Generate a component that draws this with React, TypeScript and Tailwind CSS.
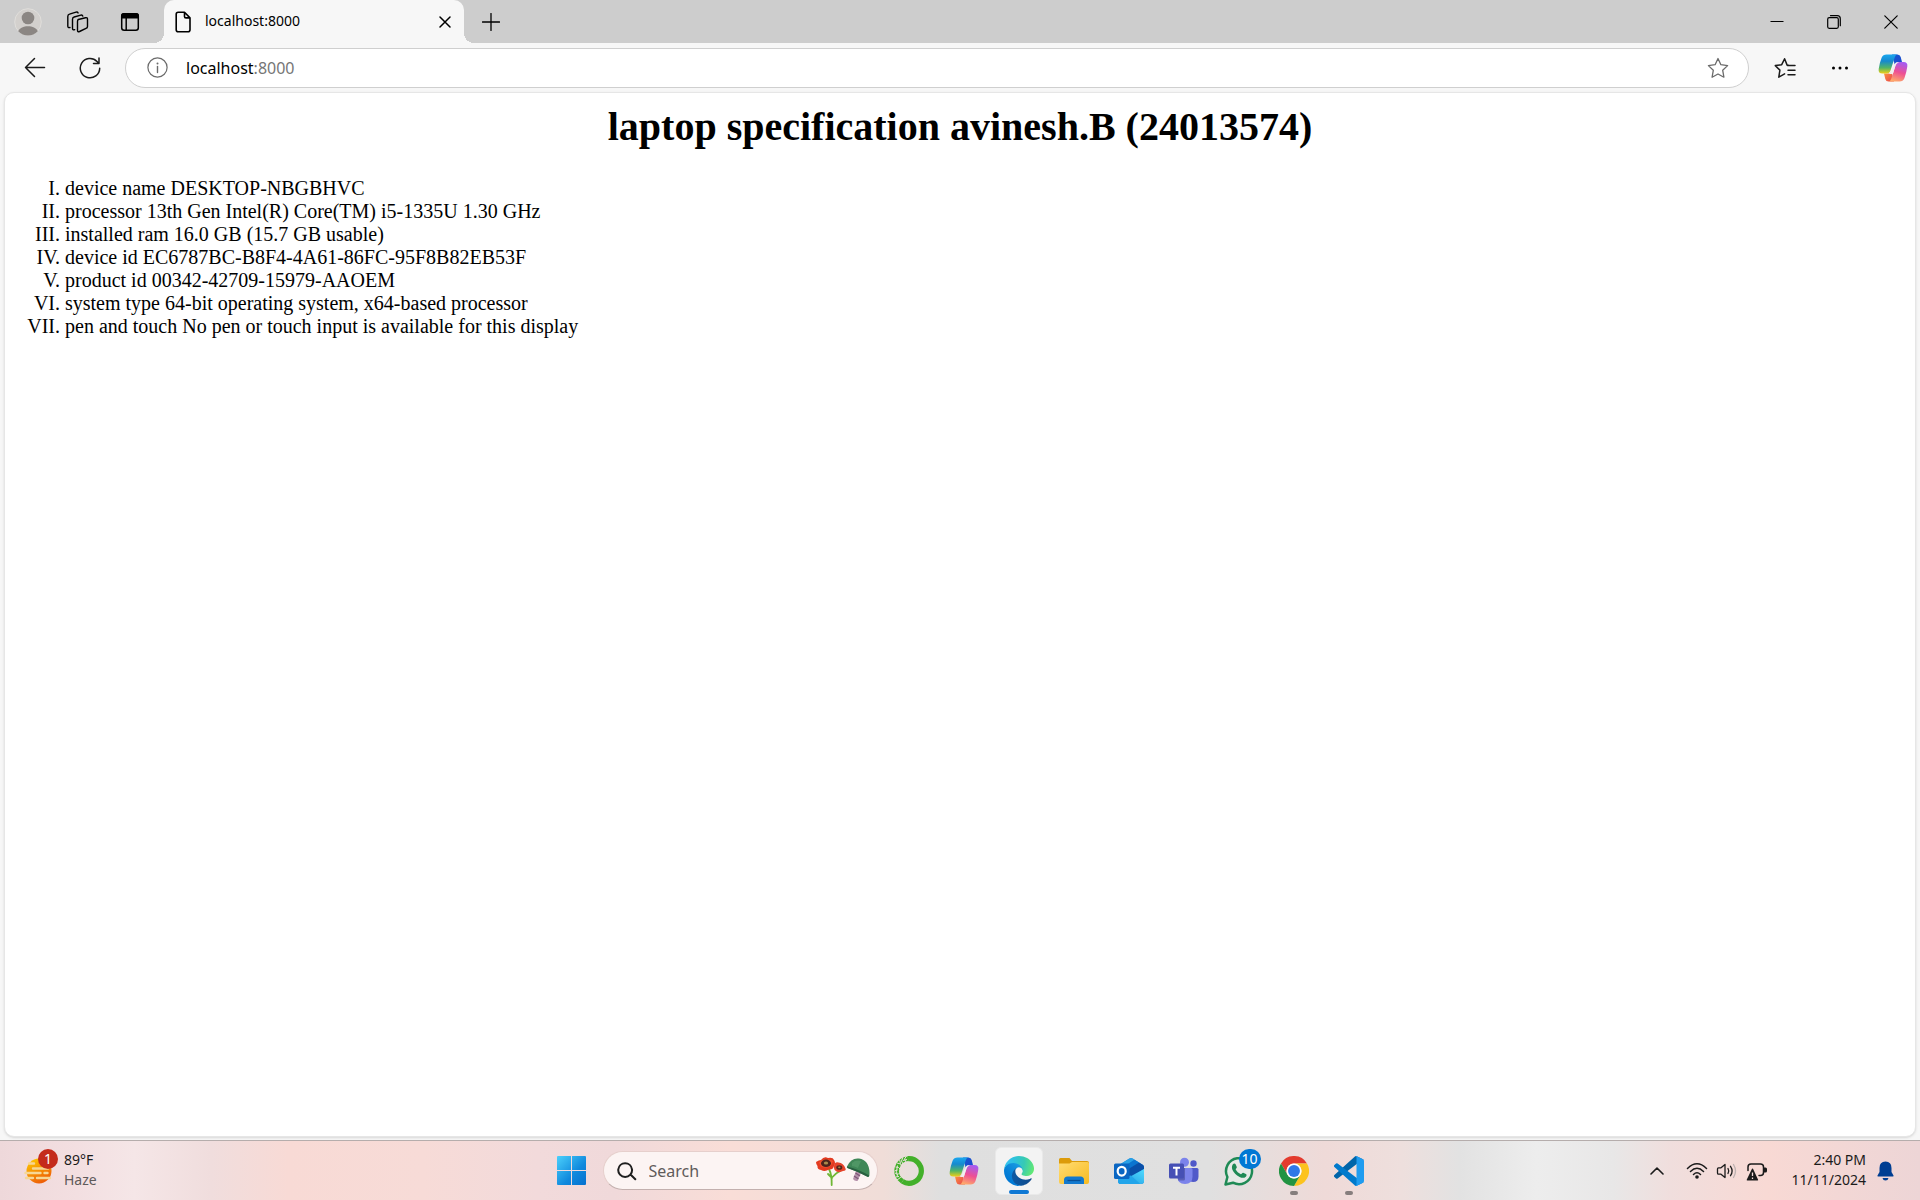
import React, { useId } from "react";

const specs = [
  "device name DESKTOP-NBGBHVC",
  "processor 13th Gen Intel(R) Core(TM) i5-1335U 1.30 GHz",
  "installed ram 16.0 GB (15.7 GB usable)",
  "device id EC6787BC-B8F4-4A61-86FC-95F8B82EB53F",
  "product id 00342-42709-15979-AAOEM",
  "system type 64-bit operating system, x64-based processor",
  "pen and touch No pen or touch input is available for this display",
];

const line = { fill: "none", stroke: "currentColor", strokeLinecap: "round", strokeLinejoin: "round" } as const;

function ProfileIcon() {
  return (
    <svg className="size-7" viewBox="0 0 28 28" aria-hidden="true">
      <circle cx="14" cy="14" r="13.3" fill="#d3d0cd" stroke="#e0dedb" />
      <circle cx="14" cy="10" r="6.3" fill="#8b8683" />
      <path d="M4.2 23.2c1.6-3.4 5.3-5 9.8-5s8.2 1.6 9.8 5A13.3 13.3 0 0 1 4.2 23.2z" fill="#8b8683" />
    </svg>
  );
}

function WorkspacesIcon() {
  return (
    <svg className="size-[22px]" viewBox="0 0 22 22" aria-hidden="true">
      <g {...line} strokeWidth="1.4">
        <path d="M11.3 8.5 18.5 6.7q2-.4 2 1.5v7.2q0 1.5-1.500 2l-6.500 3.100q-2 .8-2-1.300v-8.600q0-1.700.8-2.100z" />
        <path d="M7.700 18.700q-2.200.7-2.200-1.500V8.300q0-1.800 1.700-2.300l6.600-1.900q1.600-.4 2 1" />
        <path d="M3 16.500q-2.200.7-2.200-1.500V5.400q0-1.700 1.700-2.200L9 1.100q1.600-.4 2.100.8" />
      </g>
    </svg>
  );
}

function TabActionsIcon() {
  return (
    <svg className="size-5" viewBox="0 0 20 20" aria-hidden="true">
      <rect x="1.700" y="1.700" width="16.600" height="16.600" rx="2.500" {...line} strokeWidth="1.500" />
      <path d="M1 6.500V4q0-3 3-3h12q3 0 3 3v2.500z" fill="currentColor" />
      <path d="M6.200 6v12" {...line} strokeWidth="1.500" />
    </svg>
  );
}

function PageIcon() {
  return (
    <svg className="h-[22px] w-4" viewBox="0 0 16 22" aria-hidden="true">
      <path d="M3.200 1.200h6.300l5.500 5.700v11.900q0 2-2 2H3.200q-2 0-2-2V3.200q0-2 2-2zM9.500 1.200v4.200q0 1.500 1.500 1.500h4" {...line} strokeWidth="1.600" />
    </svg>
  );
}

function StarIcon({ lines = false }: { lines?: boolean }) {
  return (
    <svg className="size-[22px]" viewBox="0 0 22 22" aria-hidden="true">
      {lines ? (
        <path d="M14.500 8.300l-1.400-.2L10.600 1.800 7.700 7.700 1.300 8.600l4.600 4.500-1.100 7.100 5.800-3.300M13.500 8.500H21M14 13.200h7M14 17.800h7" {...line} strokeWidth="1.500" />
      ) : (
        <path d="M11 1.500 13.900 7.700l6.700.9-4.900 4.700 1.200 6.900L11 17l-5.900 3.200 1.200-6.900L1.400 8.600l6.700-.9z" {...line} strokeWidth="1.300" />
      )}
    </svg>
  );
}

function CopilotIcon() {
  const id = useId();
  return (
    <svg className="size-[30px]" viewBox="0 0 30 30" aria-hidden="true">
      <defs>
        <linearGradient id={id + "a"} x1="0" y1="0" x2="0" y2="1">
          <stop offset="0" stopColor="#1aa7ee" />
          <stop offset=".35" stopColor="#1689cf" />
          <stop offset=".7" stopColor="#52b566" />
          <stop offset="1" stopColor="#f0cf16" />
        </linearGradient>
        <linearGradient id={id + "b"} x1="0.6" y1="0" x2="0.3" y2="1">
          <stop offset="0" stopColor="#a65cf0" />
          <stop offset=".5" stopColor="#ee5093" />
          <stop offset="1" stopColor="#ffad68" />
        </linearGradient>
        <linearGradient id={id + "c"} x1="0" y1="0" x2="1" y2="1">
          <stop offset="0" stopColor="#1457cf" />
          <stop offset="1" stopColor="#1e4bd0" />
        </linearGradient>
        <linearGradient id={id + "d"} x1="0" y1="0" x2="1" y2="1">
          <stop offset="0" stopColor="#ff9a3d" />
          <stop offset="1" stopColor="#e6424f" />
        </linearGradient>
      </defs>
      <path d="M14 1.500h5.500q2.500 0 3.200 2.500l1.300 5h-4q-2.500 0-3.300 2.600z" fill={`url(#${id}c)`} />
      <path d="M16 28.500h-5.500q-2.500 0-3.200-2.500L6 20.500h4q2.500 0 3.300-2.600z" fill={`url(#${id}d)`} />
      <path d="M8.500 1.500h11q-2 .3-2.700 2.700L12.500 17.500q-.9 3-4 3h-4q-4.500 0-3.800-4.500Q1.500 10 3.600 4.700 5 1.500 8.500 1.500z" fill={`url(#${id}a)`} />
      <path d="M21.500 28.500h-11q2-.3 2.700-2.700L17.500 12.500q.9-3.500 4-3.500h4q4.500 0 3.800 4.500-.8 6-2.900 11.800-1.400 3.200-4.900 3.200z" fill={`url(#${id}b)`} />
      <path d="M16.500 11.500 18 9.500h3q-2.700.5-3.500 3L15.200 20q-.4 1-1.800 1h-3q1.700-.6 2.300-2.500z" fill="#f1f0f1" />
    </svg>
  );
}

function WeatherIcon() {
  const id = useId();
  return (
    <svg className="size-7" viewBox="0 0 28 28" aria-hidden="true">
      <defs>
        <linearGradient id={id} x1="0" y1="0" x2=".5" y2="1">
          <stop offset="0" stopColor="#ffd000" />
          <stop offset="1" stopColor="#ee6008" />
        </linearGradient>
      </defs>
      <circle cx="15" cy="14" r="12.500" fill={`url(#${id})`} />
      <g fill="none" stroke="#f6d795" strokeLinecap="round" strokeWidth="2.400">
        <path d="M5 6.500h5M9 11.500h15M1.500 16h15M20.500 16h3M2 21h7M13 21h13" />
      </g>
    </svg>
  );
}

function WindowsIcon() {
  const id = useId();
  return (
    <svg className="size-[29px]" viewBox="0 0 29 29" aria-hidden="true">
      <defs>
        <linearGradient id={id} x1="0" y1="0" x2="29" y2="29" gradientUnits="userSpaceOnUse">
          <stop offset="0" stopColor="#4bd0fb" />
          <stop offset=".6" stopColor="#1089dd" />
          <stop offset="1" stopColor="#0570cf" />
        </linearGradient>
      </defs>
      <path d="M1 0h13v14H0V1q0-1 1-1zM15 0h13q1 0 1 1v13H15zM0 15h14v14H1q-1 0-1-1zM15 15h14v13q0 1-1 1H15z" fill={`url(#${id})`} />
    </svg>
  );
}

function SearchArt() {
  return (
    <svg className="h-8 w-[54px]" viewBox="0 0 54 32" aria-hidden="true">
      <path d="M13 14q3 6 2.700 16M24 16q-4 2-7.500 6M12 19l4 4" fill="none" stroke="#6fb735" strokeWidth="1.800" strokeLinecap="round" />
      <path d="M0 7q3-2 5-2 3-4 7-2 5-1 6 2 2 3 0 6-1 4-5 3.500-4 2.500-8 .5-4-.5-3.500-4Q0 9.500 0 7z" fill="#e33a20" />
      <path d="M3 7.500q4-4.500 8-3 4-.5 6 1.500-1 4-4 6-5 1.500-8-.5z" fill="#f0522e" />
      <ellipse cx="10" cy="8.300" rx="5" ry="3.700" fill="#4a231c" />
      <ellipse cx="10" cy="8" rx="2.200" ry="1.600" fill="#a98a4a" />
      <path d="M18 11q.5-4.500 4.500-3.500 5 .5 7 6 1 2-2.500 2.500-3.500 2-6.500.5Q17.500 15 18 11z" fill="#e5432a" />
      <ellipse cx="23.300" cy="12.500" rx="3" ry="2.300" fill="#54251d" />
      <ellipse cx="23.300" cy="12.300" rx="1.200" ry=".9" fill="#a98a4a" />
      <path d="m40 16 5 2-3.500 8q-3 .5-4.500-2z" fill="#b490aa" />
      <path d="m39.500 18 4.500 3M38 21l4.500 3" stroke="#7d5876" strokeWidth="1.300" />
      <path d="M31 11.500Q35 2.500 43 3.500q10 1.500 10.500 14 0 5-1.500 4.500-9.500-5.500-20.500-9-1-.5-.5-1.500z" fill="#3f8757" />
      <path d="M36 8q4-3.500 9-2-2 4-3 7-3-1.500-6-2z" fill="#4f9665" />
      <path d="M31.500 13q10 3.500 20.500 9l1.300-1.500Q42 14 31 11.500z" fill="#286040" />
    </svg>
  );
}

function AnacondaIcon() {
  return (
    <svg className="size-[30px]" viewBox="0 0 30 30" aria-hidden="true">
      <path d="M14 2.700A12.300 12.300 0 1 1 8.500 25.400" fill="none" stroke="#43b02a" strokeWidth="5.200" />
      <path d="M14 2.700A12.300 12.300 0 0 0 8.500 25.400" fill="none" stroke="#43b02a" strokeWidth="4.800" />
      <path d="M12.500 0l-2 3 1.500 3M9 1 7.500 5 9 8M5.500 3.500l1 4 1 2.500M3 7l3.500 1M1.500 11l3 .5 2 2M.5 15l3-1M1 17l3 1.500 2-2M1.500 21 5 20.500M3 24l3.500-2.500 1-1M13 3.500l-4 1M3.500 9.500l-1 6 1 5" fill="none" stroke="#eadfdc" strokeWidth="1" />
    </svg>
  );
}

function EdgeIcon() {
  const id = useId();
  return (
    <svg className="size-[30px]" viewBox="0 0 256 256" aria-hidden="true">
      <defs>
        <linearGradient id={id + "a"} x1="63" y1="177" x2="241" y2="177" gradientUnits="userSpaceOnUse">
          <stop stopColor="#0c59a4" />
          <stop offset="1" stopColor="#114a8b" />
        </linearGradient>
        <linearGradient id={id + "b"} x1="157" y1="96" x2="46" y2="217" gradientUnits="userSpaceOnUse">
          <stop stopColor="#1b9de2" />
          <stop offset=".16" stopColor="#1595df" />
          <stop offset=".67" stopColor="#0680d7" />
          <stop offset="1" stopColor="#0078d4" />
        </linearGradient>
        <radialGradient id={id + "c"} cx="26" cy="45" r="245" gradientUnits="userSpaceOnUse">
          <stop stopColor="#35c1f1" />
          <stop offset=".25" stopColor="#2fc2df" />
          <stop offset=".6" stopColor="#36c9b5" />
          <stop offset="1" stopColor="#66eb6e" />
        </radialGradient>
      </defs>
      <path d="M231 190.500c-3.400 1.800-6.900 3.400-10.500 4.700a101.500 101.500 0 0 1-35.800 6.500c-47.200 0-88.300-32.500-88.300-74.100 0-11.800 6.500-22.200 16.400-27.800-42.700 1.800-53.700 46.300-53.700 72.300 0 73.700 67.900 81.200 82.600 81.200 7.900 0 19.800-2.300 27-4.600l1.300-.4a128.300 128.300 0 0 0 66.600-52.800 4 4 0 0 0-5.600-5z" fill={`url(#${id}a)`} />
      <path d="M105.700 241.400a79.200 79.200 0 0 1-22.700-21.300 80.700 80.700 0 0 1 29.500-120.300c3.200-1.500 8.500-4.100 15.600-4a32.400 32.400 0 0 1 25.700 13 31.900 31.900 0 0 1 6.300 18.700c0-.2 24.500-79.600-80-79.600-43.900 0-80 41.700-80 78.200a130.200 130.200 0 0 0 12.100 56 128 128 0 0 0 156.400 67 75.500 75.500 0 0 1-62.800-7.900z" fill={`url(#${id}b)`} />
      <path d="M152.300 148.900c-.8 1-3.300 2.500-3.300 5.700 0 2.700 1.700 5.200 4.800 7.300 14.400 10 41.500 8.700 41.600 8.700 10.700 0 21.100-2.900 30.300-8.300a61.400 61.400 0 0 0 30.400-52.900c.3-22.400-8-37.300-11.300-43.900C223.500 23.900 177.700 0 128 0A128 128 0 0 0 0 126.200c.5-36.500 36.800-66 80-66 3.500 0 23.500.3 42 10 16.300 8.600 24.900 19 30.800 29.200 6.200 10.700 7.300 24.100 7.300 29.500 0 5.300-2.700 13.300-7.800 20z" fill={`url(#${id}c)`} />
    </svg>
  );
}

function FolderIcon() {
  const id = useId();
  return (
    <svg className="h-7 w-[30px]" viewBox="0 0 30 28" aria-hidden="true">
      <defs>
        <linearGradient id={id} x1="0" y1="0" x2="1" y2="1">
          <stop offset="0" stopColor="#ffdc74" />
          <stop offset="1" stopColor="#f8bb20" />
        </linearGradient>
      </defs>
      <path d="M0 2.500Q0 1 1.500 1h9l2.500 3H28q2 0 2 2v4H0z" fill="#dc9b0a" />
      <path d="M0 6.500h10.500L13 5h15.500q1.500 0 1.500 1.500V25q0 2-2 2H2q-2 0-2-2z" fill={`url(#${id})`} />
      <path d="M5 27v-4q0-3.500 3.500-3.500h13q3.500 0 3.500 3.500v4z" fill="#1279cf" />
      <path d="M8.500 23.500h13" stroke="#084f96" strokeWidth="1.300" />
    </svg>
  );
}

function OutlookIcon() {
  const id = useId();
  return (
    <svg className="size-[30px]" viewBox="0 0 30 30" aria-hidden="true">
      <defs>
        <linearGradient id={id} x1="0" y1="1" x2="1" y2="0">
          <stop offset="0" stopColor="#1a94e0" />
          <stop offset="1" stopColor="#52dcff" />
        </linearGradient>
      </defs>
      <path d="M4 11q0-1.500 1.300-2.300L15 2.700q2-1.200 4 0l9.700 6Q30 9.500 30 11v14q0 3-3 3H7q-3 0-3-3z" fill="#1b86d8" />
      <path d="M5 9 15 2.700q2-1.200 4 0l1.500 1L9 11.500z" fill="#2aa0e6" />
      <path d="M9 11 20.500 3.700l4.500 2.800L12 15z" fill="#0b74cf" />
      <path d="m12 14.500 13-8L28.700 8.700q1.300.9 1.300 2.300v2L15 22.500z" fill="#0a4fa8" />
      <path d="M30 13v12q0 3-3 3H7q-1.500 0-2.500-1z" fill={`url(#${id})`} />
      <path d="M4 21.500 17 19.500 26 27.700q-.5.3-1 .3H7q-3 0-3-3z" fill="#22a5ea" />
      <rect y="7.500" width="15.500" height="15.500" rx="1.500" fill="#0a66c2" />
      <ellipse cx="7.700" cy="15.200" rx="4" ry="4.400" fill="none" stroke="#fff" strokeWidth="2.200" />
    </svg>
  );
}

function TeamsIcon() {
  return (
    <svg className="size-[30px]" viewBox="0 0 30 30" aria-hidden="true">
      <circle cx="24.500" cy="7.500" r="3.200" fill="#5059c9" />
      <path d="M20 12h8q1.500 0 1.500 1.500v7Q29.500 26 24 26q-3 0-4-2z" fill="#5059c9" />
      <circle cx="15.500" cy="6.300" r="4.500" fill="#7b83eb" />
      <path d="M9 12h13q1.500 0 1.500 1.500v7q0 7.500-7.500 7.500T8.500 21z" fill="#7b83eb" />
      <path d="M8.500 12H16v11q0 1.500-1.500 1.500H9.300L8.500 21z" fill="#5960b8" />
      <rect y="7.500" width="15" height="15" rx="1.500" fill="#4650b5" />
      <path d="M4 11.700h7M7.500 11.700v7.800" stroke="#fff" strokeWidth="2" />
    </svg>
  );
}

function WhatsAppIcon() {
  return (
    <svg className="size-[30px]" viewBox="0 0 30 30" aria-hidden="true">
      <path d="M1.500 28.500 3.400 21A13 13 0 1 1 9 26.700z" fill="#e6eae6" stroke="#1f8a55" strokeWidth="2.500" strokeLinejoin="round" />
      <path d="M8.700 8.600c1-1.500 2.400-1.300 2.900-.3l1.200 2.700c.3.800-.9 1.700-1.200 2.300 1 2.300 3 4 5.300 5 .7-.2 1.500-1.900 2.300-1.600l2.700 1.300c.9.500.9 1.600-.1 2.700-1.700 1.600-3.700 1.400-6.200.3-3.500-1.600-6-4.300-7.200-7.200-.7-1.800-.6-3.700.3-5.200z" fill="#1f8a55" />
    </svg>
  );
}

function ChromeIcon() {
  return (
    <svg className="size-[30px]" viewBox="0 0 48 48" aria-hidden="true">
      <path d="M3.200 12a24 24 0 0 1 41.600 0H24a12 12 0 0 0-10.400 18z" fill="#e33b2e" />
      <path d="M44.800 12A24 24 0 0 1 24 48l10.400-18A12 12 0 0 0 24 12z" fill="#fcc31e" />
      <path d="M24 48A24 24 0 0 1 3.200 12l10.400 18a12 12 0 0 0 20.800 0z" fill="#229342" />
      <circle cx="24" cy="24" r="12" fill="#fff" />
      <circle cx="24" cy="24" r="9.500" fill="#2f78e8" />
    </svg>
  );
}

function VSCodeIcon() {
  return (
    <svg className="size-[30px]" viewBox="0 0 100 100" aria-hidden="true">
      <path d="M96.500 10.800 75.900.9a6.200 6.200 0 0 0-7.100 1.200L1.300 63.600a4.200 4.200 0 0 0 0 6.200l5.500 5a4.200 4.200 0 0 0 5.300.2L93.400 13.400A4.100 4.100 0 0 1 100 16.700v-.2a6.300 6.300 0 0 0-3.500-5.700z" fill="#0065a9" />
      <path d="m96.500 89.200-20.600 9.900a6.200 6.200 0 0 1-7.100-1.200L1.300 36.400a4.200 4.200 0 0 1 0-6.200l5.500-5a4.200 4.200 0 0 1 5.300-.2l81.300 61.600a4.100 4.100 0 0 0 6.600-3.300v.2a6.300 6.300 0 0 1-3.500 5.700z" fill="#007acc" />
      <path d="M75.900 99.100a6.200 6.200 0 0 1-7.100-1.200A3.700 3.700 0 0 0 75 95.300V4.700a3.700 3.700 0 0 0-6.200-2.600A6.200 6.200 0 0 1 75.900.9l20.600 9.900a6.300 6.300 0 0 1 3.500 5.700v67a6.300 6.300 0 0 1-3.500 5.700z" fill="#1f9cf0" />
    </svg>
  );
}

function TrayIcons() {
  return (
    <>
      <svg className="h-5 w-[22px]" viewBox="0 0 22 20" aria-hidden="true">
        <g {...line} strokeWidth="1.500">
          <path d="M1.500 7.500q9.500-9.500 19 0M4.500 10.500q6.500-6.500 13 0M7.500 13.500q3.500-3.500 7 0" />
        </g>
        <circle cx="11" cy="16" r="1.800" fill="currentColor" />
      </svg>
      <svg className="h-5 w-[22px]" viewBox="0 0 22 20" aria-hidden="true">
        <g {...line} strokeWidth="1.300">
          <path d="M9 3.500v13l-4-3.300H2.500Q1.500 13.200 1.500 12V8q0-1.200 1-1.200H5z" />
          <path d="M12 7.500q1.500 2.500 0 5M14.500 5.300q3.200 4.700 0 9.400" />
          <path d="M17.500 3.500q4 6.500 0 13" stroke="#bdb1b0" />
        </g>
      </svg>
      <svg className="h-5 w-[22px]" viewBox="0 0 22 20" aria-hidden="true">
        <path d="M2 9.500V6q0-3 3-3h9.500q3 0 3 3v5.500q0 3-3 3H13" {...line} strokeWidth="1.500" />
        <path d="M18 6.500h1.500q1.500 0 1.500 1.500v2q0 1.500-1.500 1.500H18z" fill="currentColor" />
        <path d="M7 7.800 12 18.500q.5 1-.5 1H1.300q-1 0-.5-1L6 7.800q.5-.8 1 0z" fill="currentColor" />
        <path d="M6.500 11.500V15M6.500 16.500V18" stroke="#f3dcda" strokeWidth="1.300" />
      </svg>
    </>
  );
}

const iconButton = "flex shrink-0 items-center justify-center";

type AppItem = { name: string; icon: React.ReactNode; active?: boolean; running?: boolean; badge?: string };

const apps: AppItem[] = [
  { name: "Anaconda", icon: <AnacondaIcon /> },
  { name: "Copilot", icon: <CopilotIcon /> },
  { name: "Microsoft Edge", icon: <EdgeIcon />, active: true },
  { name: "File Explorer", icon: <FolderIcon /> },
  { name: "Outlook", icon: <OutlookIcon /> },
  { name: "Microsoft Teams", icon: <TeamsIcon /> },
  { name: "WhatsApp", icon: <WhatsAppIcon />, badge: "10" },
  { name: "Google Chrome", icon: <ChromeIcon />, running: true },
  { name: "Visual Studio Code", icon: <VSCodeIcon />, running: true },
];

function TabStrip() {
  return (
    <div className="flex h-[43px] bg-[#cdcdcd] text-black">
      <div className="flex w-[164px] shrink-0 items-center pl-[14px]">
        <button aria-label="Profile" className={`${iconButton} size-7`}><ProfileIcon /></button>
        <button aria-label="Workspaces" className={`${iconButton} ml-6 size-6`}><WorkspacesIcon /></button>
        <button aria-label="Tab actions" className={`${iconButton} ml-7 size-6`}><TabActionsIcon /></button>
      </div>
      <div className="relative flex w-[300px] items-center rounded-t-[10px] bg-[#f7f7f7] pl-[11px] pr-[7px]">
        <span className="absolute -left-[10px] bottom-0 size-[10px] bg-[radial-gradient(circle_at_0_0,#cdcdcd_10px,#f7f7f7_10px)]" />
        <span className="absolute -right-[10px] bottom-0 size-[10px] bg-[radial-gradient(circle_at_100%_0,#cdcdcd_10px,#f7f7f7_10px)]" />
        <PageIcon />
        <span className="ml-[14px] grow pb-0.5 text-[14px] leading-5">localhost:8000</span>
        <button aria-label="Close tab" className={`${iconButton} size-6`}>
          <svg className="size-3" viewBox="0 0 12 12" aria-hidden="true"><path d="M1 1l10 10M11 1 1 11" {...line} strokeWidth="1.500" /></svg>
        </button>
      </div>
      <button aria-label="New tab" className={`${iconButton} ml-[15px] w-6`}>
        <svg className="size-[18px]" viewBox="0 0 18 18" aria-hidden="true"><path d="M9 .5v17M.5 9h17" {...line} strokeWidth="1.300" /></svg>
      </button>
      <div className="ml-auto flex">
        <button aria-label="Minimize" className={`${iconButton} w-[57px]`}>
          <svg className="size-[14px]" viewBox="0 0 14 14" aria-hidden="true"><path d="M.5 6.500h13" stroke="currentColor" /></svg>
        </button>
        <button aria-label="Restore" className={`${iconButton} w-[57px]`}>
          <svg className="size-[14px]" viewBox="0 0 14 14" aria-hidden="true">
            <rect x=".7" y="2.700" width="10.600" height="10.600" rx="1.500" {...line} strokeWidth="1.200" />
            <path d="M3.500 .7h6.800q3 0 3 3v7" {...line} strokeWidth="1.200" />
          </svg>
        </button>
        <button aria-label="Close" className={`${iconButton} w-[58px]`}>
          <svg className="size-[14px]" viewBox="0 0 14 14" aria-hidden="true"><path d="M.8.8l12.400 12.400M13.200.8.8 13.200" {...line} strokeWidth="1.200" /></svg>
        </button>
      </div>
    </div>
  );
}

function Toolbar() {
  return (
    <div className="flex h-[49px] items-center pl-[23px] pr-3 text-[#1b1b1b]">
      <button aria-label="Back" className={`${iconButton} size-6`}>
        <svg className="size-[22px]" viewBox="0 0 22 22" aria-hidden="true"><path d="M20.500 10.500H1.500M10.500 1.500l-9 9 9 9" {...line} strokeWidth="1.500" /></svg>
      </button>
      <button aria-label="Refresh" className={`${iconButton} ml-[31px] size-6`}>
        <svg className="size-[22px]" viewBox="0 0 22 22" aria-hidden="true"><path d="M20.700 11.200A9.700 9.700 0 1 1 18 4.400l1.700 1.900M20 1v5.500h-5.500" {...line} strokeWidth="1.500" /></svg>
      </button>
      <div className="ml-[23px] flex h-10 grow items-center rounded-full border border-[#cfcfcf] bg-white pl-5 pr-[18px]">
        <button aria-label="Site information" className={`${iconButton} size-[22px] text-[#6b6b6b]`}>
          <svg className="size-[21px]" viewBox="0 0 21 21" aria-hidden="true">
            <circle cx="10.500" cy="10.500" r="9.600" {...line} strokeWidth="1.200" />
            <path d="M10.500 9.500v6" {...line} strokeWidth="1.400" />
            <circle cx="10.500" cy="6.500" r="1" fill="currentColor" />
          </svg>
        </button>
        <a href="#address" className="ml-[18px] grow text-[16px] leading-6 text-black">
          localhost<span className="text-[#767676]">:8000</span>
        </a>
        <button aria-label="Add to favorites" className={`${iconButton} size-6 text-[#6b6b6b]`}><StarIcon /></button>
      </div>
      <button aria-label="Favorites" className={`${iconButton} ml-6 size-6`}><StarIcon lines /></button>
      <button aria-label="Settings and more" className={`${iconButton} ml-[31px] size-6`}>
        <svg className="size-[18px]" viewBox="0 0 18 18" aria-hidden="true">
          <circle cx="2.500" cy="9" r="1.500" /><circle cx="9" cy="9" r="1.500" /><circle cx="15.500" cy="9" r="1.500" />
        </svg>
      </button>
      <button aria-label="Copilot" className={`${iconButton} ml-[26px] size-[30px]`}><CopilotIcon /></button>
    </div>
  );
}

function Taskbar() {
  return (
    <footer className="grid h-[60px] shrink-0 grid-cols-[1fr_auto_1fr] border-t border-[#b5adac] bg-[linear-gradient(90deg,#eed8da_0%,#f3dfe1_4%,#f5e6e7_7%,#f0dddd_11%,#f8dad5_15%,#f7dbd7_22%,#f2dadb_28%,#f0d9da_32%,#f9ddd7_38%,#f0ddd8_46%,#dfdfdf_49%,#e0e0e0_63%,#efdad8_69%,#eedfdd_73%,#e2e2e2_76%,#ededed_80%,#e8e7e7_84%,#f0dedd_87%,#f8d9d4_92%,#edd5d6_100%)]">
      <button className="flex items-center gap-1 justify-self-start pl-[24px] text-left">
        <span className="relative">
          <WeatherIcon />
          <span className="absolute -top-2 left-[14px] flex size-5 items-center justify-center rounded-full bg-[#c42b1c] text-[14px] leading-5 text-white">1</span>
        </span>
        <span className="ml-2 pb-0.5 text-[14px] leading-5 text-[#1b1b1b]">
          <span className="block">89°F</span>
          <span className="block text-[#5f5a5a]">Haze</span>
        </span>
      </button>
      <nav aria-label="Taskbar" className="flex items-center gap-[7px]">
        <button aria-label="Start" className={`${iconButton} size-12`}><WindowsIcon /></button>
        <label className="flex h-[39px] w-[275px] items-center rounded-full border border-[#e6cfcc] border-b-[#c3b0ae] bg-[#fcf4f3] pl-[13px] pr-[7px]">
          <svg className="size-5 shrink-0 text-[#1f1f1f]" viewBox="0 0 20 20" aria-hidden="true"><path d="M18.300 18.300 13.500 13.500M15 8.300A6.900 6.900 0 1 1 1.300 8.300a6.900 6.900 0 0 1 13.700 0z" {...line} strokeWidth="2" /></svg>
          <input type="text" placeholder="Search" aria-label="Search" className="ml-3 w-0 grow bg-transparent text-[16px] leading-6 outline-none placeholder:text-[#5f5b5a]" />
          <SearchArt />
        </label>
        {apps.map((app) => (
          <button
            key={app.name}
            aria-label={app.name}
            className={`${iconButton} relative size-12 rounded-md ${app.active ? "border border-[#e9e9e9] bg-[#f3f3f3]" : ""}`}
          >
            {app.icon}
            {app.badge && (
              <span className="absolute right-0.5 top-0.5 flex h-5 min-w-[22px] items-center justify-center rounded-full bg-[#0078d4] text-[14px] leading-5 text-white">{app.badge}</span>
            )}
            {app.active && <span className="absolute bottom-0 h-1 w-5 rounded-full bg-[#0f78d4]" />}
            {app.running && <span className="absolute bottom-0 h-1 w-2 rounded-full bg-[#867e7d]" />}
          </button>
        ))}
      </nav>
      <div className="flex items-center justify-self-end pr-[26px] text-[#1b1b1b]">
        <button aria-label="Show hidden icons" className={`${iconButton} size-6`}>
          <svg className="h-2 w-[14px]" viewBox="0 0 14 8" aria-hidden="true"><path d="M1 7l6-6 6 6" {...line} strokeWidth="1.600" /></svg>
        </button>
        <button aria-label="Network, volume and battery" className="ml-[17px] flex gap-2"><TrayIcons /></button>
        <button className="ml-5 w-[78px] pb-0.5 text-right text-[14px] leading-5">
          <span className="block">2:40 PM</span>
          <span className="block">11/11/2024</span>
        </button>
        <button aria-label="Notifications" className={`${iconButton} ml-[11px] text-[#003e92]`}>
          <svg className="h-5 w-[17px]" viewBox="0 0 17 20" aria-hidden="true">
            <path d="M8.500.5Q14.500.5 14.500 7v4l2 3.500q.5 1-.7 1H1.200q-1.200 0-.7-1l2-3.500V7Q2.500.5 8.500.5zM5.500 17h6q-.5 2.500-3 2.500t-3-2.500z" fill="currentColor" />
          </svg>
        </button>
      </div>
    </footer>
  );
}

export default function App() {
  return (
    <div className="flex min-h-screen flex-col bg-[#f7f7f7] font-['Noto_Sans',sans-serif]">
      <TabStrip />
      <Toolbar />
      <main className="mx-1 mb-[3px] grow rounded-[10px] border border-[#e6e6e6] bg-white px-[10px] pb-6 pt-[11px] font-['Liberation_Serif',serif] text-black shadow-sm">
        <h1 className="text-center text-[40px] font-bold leading-[46px]">laptop specification avinesh.B (24013574)</h1>
        <ol className="mt-[27px] list-[upper-roman] pl-[50px] text-[20px] leading-[23px]">
          {specs.map((spec) => (
            <li key={spec}>{spec}</li>
          ))}
        </ol>
      </main>
      <Taskbar />
    </div>
  );
}
